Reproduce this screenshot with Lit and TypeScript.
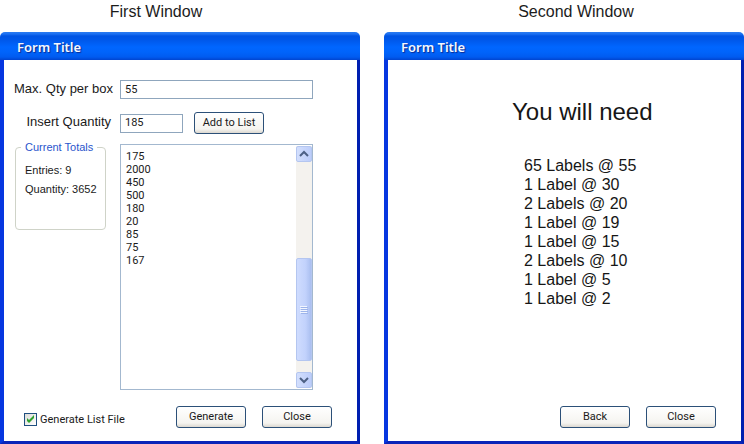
import { LitElement, html, css } from "lit";
import { customElement, property, state } from "lit/decorators.js";

@customElement("xp-window")
class XpWindow extends LitElement {
  @property() caption = "";
  @property() heading = "";

  static styles = css`
    :host {
      display: flex;
      flex-direction: column;
      min-width: 0;
    }
    .caption {
      margin: 0;
      padding: 2px 48px 0 0;
      height: 32px;
      box-sizing: border-box;
      font: 16px/20px "Liberation Sans", Arial, sans-serif;
      color: #1c1c1c;
      text-align: center;
    }
    .second {
      padding: 2px 0 0 24px;
    }
    .bar {
      box-sizing: border-box;
      height: 28px;
      padding: 3px 17px 0;
      border-radius: 5px 5px 0 0;
      background: linear-gradient(
        #2a7bf0 0,
        #1c70f2 2px,
        #0054e3 4px,
        #0058ea 8px,
        #0066ff 15px,
        #0064fb 20px,
        #005bf0 25px,
        #0044d0 28px
      );
      color: #f4f8ff;
      font: 600 13px/24px "Noto Sans", "Trebuchet MS", sans-serif;
      text-shadow: 1px 1px 1px #0a2a90;
    }
    .body {
      flex: 1;
      display: flex;
      flex-direction: column;
      border: solid;
      border-width: 0 3px 3px 4px;
      border-color: #0831d9 #001fb0 #0a24b8 #0636e0;
      background: #fff;
    }
  `;

  render() {
    return html`
      <h2 class="caption ${this.id === "second" ? "second" : ""}">${this.caption}</h2>
      <div class="bar">${this.heading}</div>
      <div class="body"><slot></slot></div>
    `;
  }
}

@customElement("app-root")
class AppRoot extends LitElement {
  @state() private entries = [175, 2000, 450, 500, 180, 20, 85, 75, 167];

  private labels = [
    [65, 55],
    [1, 30],
    [2, 20],
    [1, 19],
    [1, 15],
    [2, 10],
    [1, 5],
    [1, 2],
  ];

  static styles = css`
    :host {
      display: grid;
      grid-template-columns: 1fr 1fr;
      gap: 24px;
      min-height: 100vh;
      background: #fff;
      color: #1a1a1a;
      font: 11px/13px Roboto, Tahoma, sans-serif;
    }
    .form {
      flex: 1;
      display: grid;
      grid-template-columns: 102px 1fr;
      grid-template-rows: 20px 22px 1fr;
      column-gap: 7px;
      padding: 20px 44px 16px 7px;
      row-gap: 12px;
    }
    .name {
      font: 13px/18px "Liberation Sans", Arial, sans-serif;
      text-align: right;
      white-space: nowrap;
      align-self: start;
    }
    .name.short {
      padding: 1px 2px 0 0;
    }
    input.text {
      box-sizing: border-box;
      width: 100%;
      height: 19px;
      margin: 0;
      padding: 0 4px 1px;
      border: 1px solid #8fa6bd;
      border-radius: 0;
      background: #fff;
      color: inherit;
      font: inherit;
    }
    .add {
      display: flex;
      align-items: center;
      gap: 11px;
    }
    .add input.text {
      width: 63px;
    }
    button {
      box-sizing: border-box;
      margin: 0;
      padding: 0;
      font: inherit;
      color: inherit;
    }
    .push {
      width: 70px;
      height: 22px;
      padding-bottom: 2px;
      border: 1px solid #2c5078;
      border-radius: 3px;
      background: linear-gradient(#fff, #f5f4f0 80%, #dcd8d0);
    }
    .totals {
      box-sizing: border-box;
      align-self: start;
      min-width: 0;
      height: 89px;
      margin: -5px 7px 0 4px;
      padding: 7px 0 0 9px;
      border: 1px solid #cfd3c8;
      border-radius: 4px;
      font: 11px/19px "Liberation Sans", Arial, sans-serif;
      white-space: nowrap;
    }
    .totals legend {
      padding: 0 4px;
      margin-left: -4px;
      line-height: 13px;
      color: #2a55cc;
    }
    .totals p {
      margin: 0;
    }
    .list {
      display: flex;
      margin-top: -2px;
      border: 1px solid #a3b8cf;
      padding: 1px 0;
    }
    .list ul {
      flex: 1;
      margin: 0;
      padding: 4px 5px;
      list-style: none;
    }
    .scroll {
      display: flex;
      flex-direction: column;
      width: 16px;
      background: #f4f2ee;
    }
    .arrow,
    .thumb {
      box-sizing: border-box;
      width: 16px;
      border: 1px solid #b4c6f0;
      border-radius: 2px;
      background: linear-gradient(90deg, #d3dffd, #bccdfa);
      display: grid;
      place-items: center;
    }
    .arrow {
      height: 16px;
    }
    .thumb {
      flex: 103;
      background: linear-gradient(90deg, #cfdcfe, #c2d2fc 60%, #aabff0);
    }
    .above {
      flex: 98;
    }
    .below {
      flex: 11;
    }
    svg {
      display: block;
    }
    .foot {
      display: flex;
      align-items: center;
      gap: 16px;
      padding: 0 25px 13px 20px;
    }
    .check {
      display: grid;
      grid-template-columns: 13px auto;
      align-items: center;
      column-gap: 3px;
      margin-right: auto;
      padding-top: 4px;
      white-space: nowrap;
    }
    .check input {
      appearance: none;
      grid-area: 1 / 1;
      box-sizing: border-box;
      width: 13px;
      height: 13px;
      margin: 0;
      border: 1px solid #1f4f80;
      background: linear-gradient(135deg, #dcdcd7, #fff);
    }
    .check svg {
      grid-area: 1 / 1;
      pointer-events: none;
    }
    .check input:not(:checked) + svg {
      visibility: hidden;
    }
    .result {
      flex: 1;
      font: 16px/19px "Liberation Sans", Arial, sans-serif;
      padding: 37px 0 0 124px;
      color: #161616;
    }
    .result h3 {
      margin: 0 0 30px;
      font: 24px/29px "Liberation Sans", Arial, sans-serif;
    }
    .result ul {
      margin: 0;
      padding: 0 0 0 12px;
      list-style: none;
    }
    .actions {
      justify-content: flex-end;
    }
  `;

  private arrow(d: string) {
    return html`<svg width="10" height="8" viewBox="0 0 10 8" aria-hidden="true">
      <path d=${d} fill="none" stroke="#4d6185" stroke-width="2" />
    </svg>`;
  }

  render() {
    const total = this.entries.reduce((a, b) => a + b, 0);
    return html`
      <xp-window id="first" caption="First Window" heading="Form Title">
        <div class="form">
          <label class="name" for="max">Max. Qty per box</label>
          <input class="text" id="max" value="55" />
          <label class="name short" for="qty">Insert Quantity</label>
          <div class="add">
            <input class="text" id="qty" value="185" />
            <button class="push">Add to List</button>
          </div>
          <fieldset class="totals">
            <legend>Current Totals</legend>
            <p>Entries: ${this.entries.length}</p>
            <p>Quantity: ${total}</p>
          </fieldset>
          <div class="list">
            <ul aria-label="Quantities">
              ${this.entries.map((n) => html`<li>${n}</li>`)}
            </ul>
            <div class="scroll">
              <button class="arrow" aria-label="Scroll up">${this.arrow("M1 6 5 2 9 6")}</button>
              <div class="above"></div>
              <div class="thumb">
                <svg width="8" height="8" viewBox="0 0 8 8" aria-hidden="true">
                  <path d="M0 .5h7M0 2.5h7M0 4.5h7M0 6.5h7" stroke="#f2f6ff" />
                  <path d="M1 1.5h7M1 3.5h7M1 5.5h7M1 7.5h7" stroke="#9db4ea" />
                </svg>
              </div>
              <div class="below"></div>
              <button class="arrow" aria-label="Scroll down">${this.arrow("M1 2 5 6 9 2")}</button>
            </div>
          </div>
        </div>
        <div class="foot">
          <label class="check">
            <input type="checkbox" checked />
            <svg width="13" height="13" viewBox="0 0 13 13" aria-hidden="true">
              <path d="M3 5v3l2 2 5-5V2L5 7z" fill="#2fa12f" />
            </svg>
            <span>Generate List File</span>
          </label>
          <button class="push">Generate</button>
          <button class="push">Close</button>
        </div>
      </xp-window>
      <xp-window id="second" caption="Second Window" heading="Form Title">
        <div class="result">
          <h3>You will need</h3>
          <ul>
            ${this.labels.map(([n, size]) => html`<li>${n} ${n > 1 ? "Labels" : "Label"} @ ${size}</li>`)}
          </ul>
        </div>
        <div class="foot actions">
          <button class="push">Back</button>
          <button class="push">Close</button>
        </div>
      </xp-window>
    `;
  }
}
